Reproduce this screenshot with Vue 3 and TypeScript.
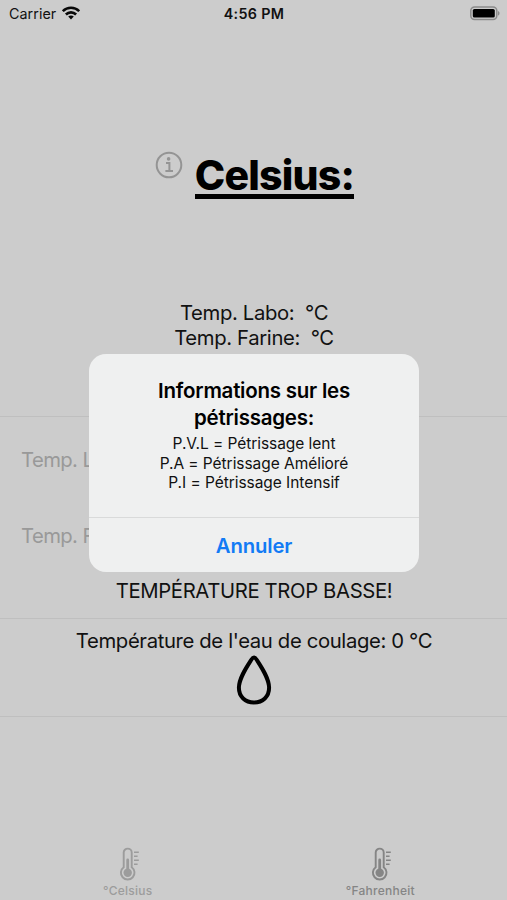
<script setup lang="ts">
interface Tab {
  label: string
  selected: boolean
}

const tabs: Tab[] = [
  { label: '°Celsius', selected: false },
  { label: '°Fahrenheit', selected: true },
]
const messageLines: string[] = [
  'P.V.L = Pétrissage lent',
  'P.A = Pétrissage Amélioré',
  'P.I = Pétrissage Intensif',
]
</script>

<template>
  <div class="screen">
    <header class="status">
      <div class="carrier">
        <span>Carrier</span>
        <svg class="wifi" viewBox="0 0 18 14" width="18" height="14">
          <g fill="none" stroke="#080808" stroke-width="2.6">
            <path d="M.8 5.2C5.3 .6 12.7 .6 17.2 5.2" />
            <path d="M3.9 8.5C6.8 5.6 11.2 5.6 14.1 8.5" />
          </g>
          <path d="M6.2 10.6C7.8 9.1 10.2 9.1 11.8 10.6L9 13.4Z" fill="#080808" />
        </svg>
      </div>
      <div class="clock">4:56 PM</div>
      <div class="battery">
        <svg viewBox="0 0 31 15" width="31" height="15">
          <rect x="1.8" y="1" width="26" height="12.6" rx="3.8" fill="none" stroke="#8b8b8b" stroke-width="1.5" />
          <rect x="3.8" y="3" width="22" height="8.6" rx="1.6" fill="#000" />
          <path d="M29 5C31 5.8 31 8.8 29 9.6Z" fill="#8b8b8b" />
        </svg>
      </div>
    </header>

    <section class="intro">
      <div class="heading">
        <svg class="info" viewBox="0 0 28 28" width="28" height="28">
          <circle cx="14" cy="14" r="12.3" fill="none" stroke="#949494" stroke-width="2" />
          <circle cx="13.6" cy="7.9" r="1.8" fill="#949494" />
          <path d="M11 12.1H14.4V19.6M10.4 19.9H18" fill="none" stroke="#949494" stroke-width="2" />
        </svg>
        <h1>Celsius:</h1>
      </div>
      <p class="reading labo">Temp. Labo:&nbsp; °C</p>
      <p class="reading farine">Temp. Farine:&nbsp; °C</p>
    </section>

    <section class="fields">
      <div class="field">Temp. Labo</div>
      <div class="field">Temp. Farine</div>
      <p class="warning">TEMPÉRATURE TROP BASSE!</p>
    </section>

    <section class="result">
      <p>Température de l'eau de coulage: 0 °C</p>
      <svg class="drop" viewBox="0 0 36 50" width="36" height="50">
        <path
          d="M18 2.6C16.9 2.6 16.2 3.4 15.5 4.5C10.4 12.4 2.9 23.4 2.9 32.8C2.9 41.7 9.2 47.4 18 47.4S33.1 41.7 33.1 32.8C33.1 23.4 25.6 12.4 20.5 4.5C19.8 3.4 19.1 2.6 18 2.6Z"
          fill="none"
          stroke="#000"
          stroke-width="4"
        />
      </svg>
    </section>

    <nav class="tabs">
      <div v-for="tab in tabs" :key="tab.label" class="tab" :class="{ selected: tab.selected }">
        <svg viewBox="0 0 22 34" width="22" height="34">
          <path
            d="M4.7 20.2V5.6a4 4 0 0 1 8 0V20.2a6.8 6.8 0 1 1-8 0Z"
            fill="none"
            stroke="currentColor"
            stroke-width="1.9"
          />
          <path d="M8.7 13V24" stroke="currentColor" stroke-width="2.8" stroke-linecap="round" />
          <circle cx="8.7" cy="25.7" r="4.2" fill="currentColor" />
          <path d="M15 5.3H19.8M15 9.3H18.6M15 13.3H19.8M15 17.3H18.6" stroke="currentColor" stroke-width="1.5" />
        </svg>
        <span>{{ tab.label }}</span>
      </div>
    </nav>

    <div class="overlay">
      <div class="alert" role="alertdialog">
        <div class="content">
          <h2>Informations sur les<br />pétrissages:</h2>
          <p v-for="line in messageLines" :key="line">{{ line }}</p>
        </div>
        <button type="button">Annuler</button>
      </div>
    </div>
  </div>
</template>

<style>
body {
  margin: 0;
  background: #cccccc;
}
</style>

<style scoped>
.screen {
  position: relative;
  display: flex;
  flex-direction: column;
  width: 507px;
  height: 900px;
  overflow: hidden;
  background: #cccccc;
  color: #111;
  font-family: Inter, 'Liberation Sans', sans-serif;
  font-size: 20.3px;
  letter-spacing: -0.36px;
}
p, h1, h2 {
  margin: 0;
}
.status {
  display: grid;
  grid-template-columns: 1fr auto 1fr;
  align-items: center;
  box-sizing: border-box;
  height: 28px;
  padding: 0 7px 2px 9px;
  font-size: 14.3px;
  letter-spacing: 0.05px;
}
.carrier {
  display: flex;
  align-items: center;
  gap: 6px;
}
.clock {
  margin-right: 1px;
  font-weight: 600;
  letter-spacing: 0.35px;
}
.battery {
  display: flex;
  justify-content: flex-end;
}
.intro {
  box-sizing: border-box;
  height: 388px;
  padding: 122px 0 0 1px;
  text-align: center;
}
.heading {
  display: flex;
  align-items: flex-start;
  justify-content: center;
  gap: 12px;
  height: 150px;
  padding-left: 1px;
}
.info {
  margin-top: 1px;
}
h1 {
  height: 44px;
  color: #000;
  font-size: 41px;
  font-weight: 800;
  line-height: 50px;
  letter-spacing: -0.8px;
  border-bottom: 5px solid #000;
}
.reading {
  line-height: 25px;
}
.fields {
  box-sizing: border-box;
  height: 202px;
  padding-top: 5px;
  border-top: 1px solid #bfbfbf;
}
.field {
  height: 76px;
  padding-left: 21px;
  color: #999;
  line-height: 76px;
  letter-spacing: -0.6px;
}
.warning {
  margin-top: 4px;
  padding-left: 1px;
  text-align: center;
  line-height: 26px;
}
.result {
  display: flex;
  flex-direction: column;
  align-items: center;
  box-sizing: border-box;
  height: 98px;
  padding-top: 9px;
  border-top: 1px solid #bfbfbf;
  line-height: 26px;
}
.result p {
  padding-left: 1px;
}
.drop {
  margin-top: 1px;
}
.tabs {
  display: grid;
  grid-template-columns: 1fr 1fr;
  box-sizing: border-box;
  height: 184px;
  padding-top: 130px;
  border-top: 1px solid #bfbfbf;
}
.tab {
  display: flex;
  flex-direction: column;
  align-items: center;
  gap: 2px;
  color: #9c9c9c;
  font-size: 12px;
  font-weight: 500;
  line-height: 15px;
  letter-spacing: 0.25px;
}
.tab svg {
  margin-left: 4px;
}
.tab:first-child {
  padding-left: 2px;
}
.tab.selected {
  color: #858585;
}
.overlay {
  position: absolute;
  inset: 0;
  display: flex;
  align-items: flex-start;
  justify-content: center;
  padding-top: 354px;
}
.alert {
  width: 330px;
  height: 218px;
  overflow: hidden;
  border-radius: 17px;
  background: #eff0f0;
  text-align: center;
}
.content {
  box-sizing: border-box;
  height: 163px;
  padding: 23px 0 0 1px;
}
h2 {
  margin-bottom: 3px;
  color: #000;
  font-size: 20.5px;
  font-weight: 600;
  line-height: 27px;
  letter-spacing: -0.24px;
}
.content p {
  font-size: 15.5px;
  line-height: 19.5px;
  letter-spacing: -0.05px;
}
button {
  display: block;
  width: 100%;
  height: 55px;
  padding: 0 0 0 1px;
  border: 0;
  border-top: 1px solid #d9dada;
  background: none;
  color: #127bf5;
  font: inherit;
  font-weight: 600;
  letter-spacing: -0.15px;
}
</style>
